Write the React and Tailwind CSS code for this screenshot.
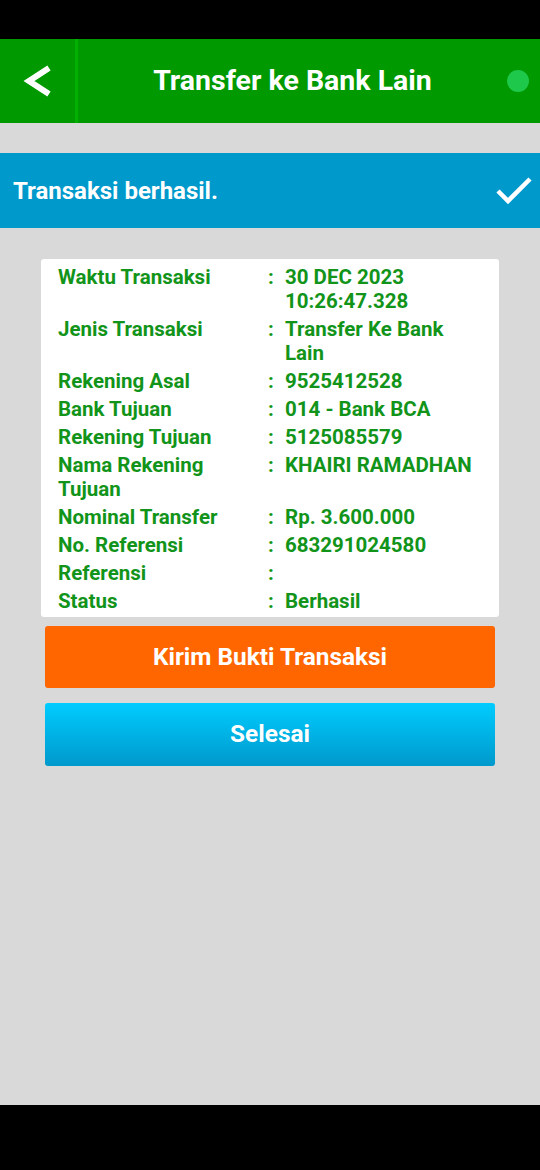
const rows = [
  ["Waktu Transaksi", "30 DEC 2023 10:26:47.328"],
  ["Jenis Transaksi", "Transfer Ke Bank Lain"],
  ["Rekening Asal", "9525412528"],
  ["Bank Tujuan", "014 - Bank BCA"],
  ["Rekening Tujuan", "5125085579"],
  ["Nama Rekening Tujuan", "KHAIRI RAMADHAN"],
  ["Nominal Transfer", "Rp. 3.600.000"],
  ["No. Referensi", "683291024580"],
  ["Referensi", ""],
  ["Status", "Berhasil"],
];

export default function App() {
  return (
    <div className="w-[540px] h-[1170px] flex flex-col bg-[#d9d9d9] font-['Roboto',sans-serif]">
      {/* status bar */}
      <div className="h-[39px] bg-black shrink-0" />

      {/* header */}
      <div className="h-[84px] bg-[#009900] flex items-center shrink-0">
        <div className="w-[78px] h-full flex items-center justify-center border-r-[3px] border-[#00b000]">
          <svg width="34" height="34" viewBox="0 0 34 34">
            <polyline points="28,4 8,17 28,30" fill="none" stroke="white" strokeWidth="6" strokeLinejoin="miter" />
          </svg>
        </div>
        <div className="flex-1 text-center text-white font-bold text-[28.5px] leading-none">
          Transfer ke Bank Lain
        </div>
        <div className="w-[22px] h-[22px] rounded-full bg-[#1ec84b] mr-[11px]" />
      </div>

      <div className="h-[30px] shrink-0" />

      {/* success banner */}
      <div className="h-[75px] bg-[#0099cc] flex items-center justify-between pl-[13px] pr-[7px] shrink-0">
        <span className="text-white font-bold text-[24px]">Transaksi berhasil.</span>
        <svg width="38" height="30" viewBox="0 0 38 30">
          <polyline points="3,15 13,25 35,3" fill="none" stroke="white" strokeWidth="4.5" />
        </svg>
      </div>

      {/* detail card */}
      <div className="mx-[41px] mt-[31px] bg-white rounded-[3px] pt-[6px] pb-[4px] pl-[17px] pr-[19px] flex flex-col gap-[4px]">
        {rows.map(([label, value], i) => (
          <div key={i} className="flex text-[#12941a] font-bold text-[20.5px] leading-[24px]">
            <div className="w-[210px] shrink-0 pr-[6px]">{label}</div>
            <div className="w-[17px] shrink-0">:</div>
            <div className="flex-1">{value}</div>
          </div>
        ))}
      </div>

      {/* buttons */}
      <div className="mx-[45px] mt-[9px] flex flex-col gap-[15px]">
        <button className="h-[62px] rounded-[3px] bg-[#ff6600] text-white font-bold text-[24.4px]">
          Kirim Bukti Transaksi
        </button>
        <button className="h-[63px] rounded-[3px] bg-gradient-to-b from-[#00ccff] to-[#0099cc] text-white font-bold text-[24.4px]">
          Selesai
        </button>
      </div>

      <div className="flex-1" />
      <div className="h-[65px] bg-black shrink-0" />
    </div>
  );
}
